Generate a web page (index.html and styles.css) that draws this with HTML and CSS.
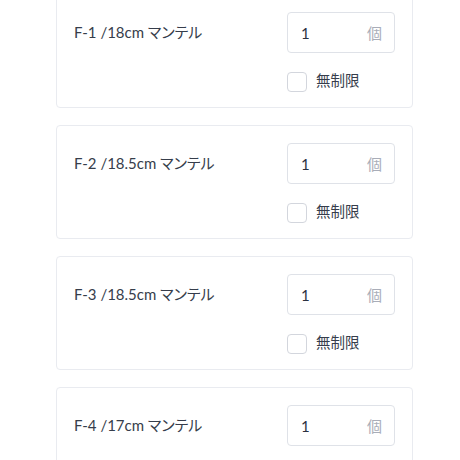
FILE: index.html
```html
<!DOCTYPE html>
<html lang="ja">
<head>
<meta charset="utf-8">
<link rel="stylesheet" href="styles.css">
</head>
<body>
<div class="list">
  <div class="card">
    <div class="name">F-1 /18cm マンテル</div>
    <div class="ctrl">
      <div class="qty"><span class="num">1</span><span class="unit">個</span></div>
      <label class="opt"><span class="box"></span><span class="opt-text">無制限</span></label>
    </div>
  </div>
  <div class="card">
    <div class="name">F-2 /18.5cm マンテル</div>
    <div class="ctrl">
      <div class="qty"><span class="num">1</span><span class="unit">個</span></div>
      <label class="opt"><span class="box"></span><span class="opt-text">無制限</span></label>
    </div>
  </div>
  <div class="card">
    <div class="name">F-3 /18.5cm マンテル</div>
    <div class="ctrl">
      <div class="qty"><span class="num">1</span><span class="unit">個</span></div>
      <label class="opt"><span class="box"></span><span class="opt-text">無制限</span></label>
    </div>
  </div>
  <div class="card">
    <div class="name">F-4 /17cm マンテル</div>
    <div class="ctrl">
      <div class="qty"><span class="num">1</span><span class="unit">個</span></div>
      <label class="opt"><span class="box"></span><span class="opt-text">無制限</span></label>
    </div>
  </div>
</div>
</body>
</html>
```
FILE: styles.css
```css
html, body {
  margin: 0;
  padding: 0;
  background: #ffffff;
  height: 460px;
  overflow: hidden;
}
body {
  font-family: Lato, "Noto Sans CJK JP", sans-serif;
  font-size: 15px;
  color: #363d4b;
}
.list {
  margin-top: -6px;
  padding-left: 56px;
  width: 357px;
  display: flex;
  flex-direction: column;
  gap: 17px;
}
.card {
  border: 1px solid #e9ebf0;
  border-radius: 4px;
  padding: 17px 17px 15px 17px;
  display: flex;
  justify-content: space-between;
  align-items: flex-start;
  height: 80px;
}
.name {
  line-height: 41px;
  height: 41px;
  font-feature-settings: "palt";
}
.ctrl {
  display: flex;
  flex-direction: column;
  gap: 19px;
  width: 108px;
}
.qty {
  box-sizing: border-box;
  height: 41px;
  border: 1px solid #dfe2e8;
  border-radius: 4px;
  padding: 0 12px 0 13px;
  display: flex;
  align-items: center;
  justify-content: space-between;
}
.num {
  color: #2b3140;
}
.unit {
  color: #a9adb8;
}
.opt {
  display: flex;
  align-items: center;
  gap: 9px;
  height: 20px;
}
.opt-text {
  font-size: 14.5px;
  line-height: 18px;
  margin-top: -2px;
}
.box {
  box-sizing: border-box;
  width: 20px;
  height: 20px;
  border: 1px solid #d3d6dd;
  border-radius: 4px;
}
```
